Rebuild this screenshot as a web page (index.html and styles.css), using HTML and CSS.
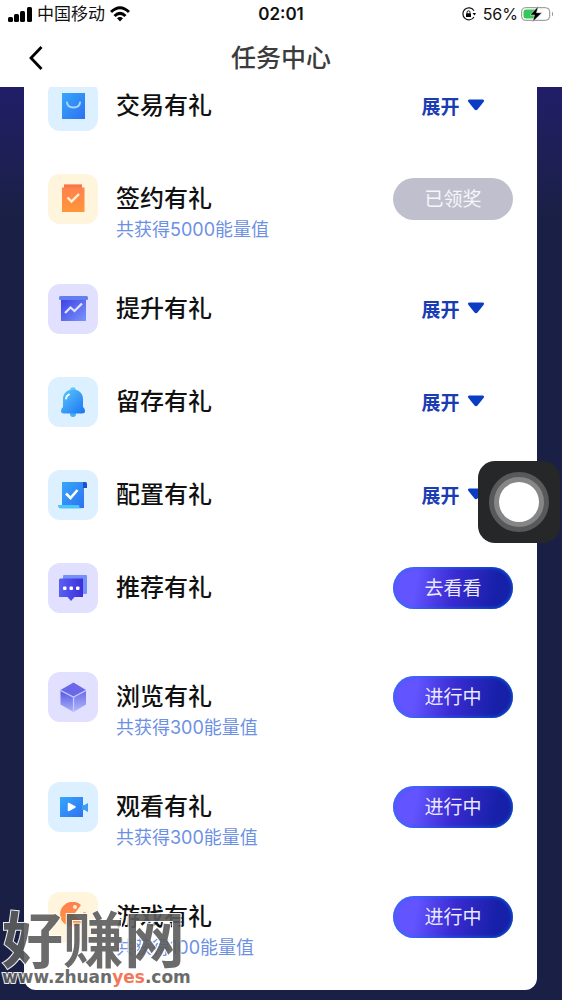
FILE: index.html
```html
<!DOCTYPE html>
<html lang="zh-CN">
<head>
<meta charset="utf-8">
<meta name="viewport" content="width=device-width, initial-scale=1">
<title>任务中心</title>
<link rel="stylesheet" href="styles.css">
</head>
<body>
<svg class="defs" width="0" height="0" aria-hidden="true">
  <defs>
    <linearGradient id="blue" x1="0" y1="0" x2="1" y2="1"><stop offset="0" stop-color="#35a8fb"/><stop offset="1" stop-color="#2f70f0"/></linearGradient>
    <linearGradient id="orange" x1="0" y1="0" x2="0" y2="1"><stop offset="0" stop-color="#ff7f50"/><stop offset="1" stop-color="#ff9638"/></linearGradient>
    <linearGradient id="indigo" x1="0" y1="0" x2="1" y2="1"><stop offset="0" stop-color="#3b3fe4"/><stop offset="1" stop-color="#7c94fa"/></linearGradient>
    <linearGradient id="bell" x1="0" y1="0" x2="1" y2="1"><stop offset="0" stop-color="#5cc8fb"/><stop offset="1" stop-color="#1a73f4"/></linearGradient>
    <linearGradient id="bubble" x1="0" y1="0" x2="1" y2="0"><stop offset="0" stop-color="#5a60f4"/><stop offset="1" stop-color="#3c2fd8"/></linearGradient>
    <linearGradient id="face" x1="0" y1="0" x2="0" y2="1"><stop offset="0" stop-color="#5355e0"/><stop offset="1" stop-color="#a9b2fb"/></linearGradient>
  </defs>
</svg>

<header class="top">
  <div class="status">
    <div class="status-side">
      <svg width="24" height="15" viewBox="0 0 24 15"><rect x="0" y="10" width="5" height="5" rx="1.5"/><rect x="6" y="7" width="5" height="8" rx="1.5"/><rect x="12" y="4" width="5" height="11" rx="1.5"/><rect x="19" y="0" width="5" height="15" rx="1.5"/></svg>
      <span class="carrier">中国移动</span>
      <svg width="20" height="16" viewBox="0 0 20 16" fill="none" stroke="#000" stroke-width="3"><path d="M1 6Q10-2.500 19 6"/><path d="M4.500 10Q10 4.800 15.500 10"/><path d="M10 15.500L7 12.300Q10 9.700 13 12.300Z" fill="#000" stroke="none"/></svg>
    </div>
    <time class="clock">02:01</time>
    <div class="status-side status-end">
      <svg width="14" height="14" viewBox="0 0 14 14"><path d="M12 3.700A6 6 0 1 0 12 10" fill="none" stroke="#111" stroke-width="1.200"/><path d="M10.500 6H14L12.500 8.500Z"/><rect x="4" y="6.300" width="5" height="3.700" rx=".6"/><path d="M5 6.500V5.300a1.500 1.500 0 0 1 3 0V6.500" fill="none" stroke="#111" stroke-width="1"/></svg>
      <span class="percent">56%</span>
      <svg class="battery" width="33" height="16" viewBox="0 0 33 16"><rect x=".7" y="1.700" width="28" height="12.600" rx="4" fill="#fff" stroke="#8b8b8b"/><path d="M5 3.500H15V12.500H5Q2.500 12.500 2.500 10V6Q2.500 3.500 5 3.500Z" fill="#34c759"/><path d="M31 5.500q2 2.300 0 5Z" fill="#8b8b8b"/><path d="M17.500 0L9 9H13.500L11.500 16L21 6.700H15.500Z" stroke="#fff" stroke-width=".5"/></svg>
    </div>
  </div>
  <div class="nav">
    <button class="back" type="button" aria-label="返回"><svg width="16" height="26" viewBox="0 0 16 26" fill="none" stroke="#000" stroke-width="2.800"><path d="M13.500 2L3 13L13.500 24"/></svg></button>
    <h1 class="nav-title">任务中心</h1>
    <span></span>
  </div>
</header>

<main class="page">
  <ul class="card">
    <li class="row">
      <span class="tile tile-blue"><svg width="30" height="30" viewBox="0 0 30 30"><rect x="4" y="2" width="23" height="26" fill="url(#blue)"/><path d="M9 11.500Q9.500 16.500 15.500 16.500T22 11.500" fill="none" stroke="#a9d6ff" stroke-width="2" stroke-linecap="round"/></svg></span>
      <div class="text"><h2 class="title">交易有礼</h2></div>
      <button class="expand" type="button">展开<svg class="caret" width="18" height="12" viewBox="0 0 18 12"><path d="M2.500.5H15.500Q18 .5 16.500 3L10.500 10.500Q9 12 7.500 10.500L1.500 3Q0 .5 2.500.5Z"/></svg></button>
    </li>
    <li class="row">
      <span class="tile tile-cream"><svg width="30" height="30" viewBox="0 0 30 30"><path d="M4 3.500H6V.500H24V3.500H26.500V28H4Z" fill="url(#orange)"/><path d="M6 .500H24V3.500H6Z" fill="#f5704a" opacity=".6"/><path d="M9.500 13.500L13.500 17.500L21 10" fill="none" stroke="#fff0d8" stroke-width="2.400"/></svg></span>
      <div class="text"><h2 class="title">签约有礼</h2><p class="sub">共获得5000能量值</p></div>
      <button class="pill pill-done" type="button">已领奖</button>
    </li>
    <li class="row">
      <span class="tile tile-lilac"><svg width="30" height="30" viewBox="0 0 30 30"><rect x="3" y="4" width="25" height="23" fill="url(#indigo)"/><rect x="1" y="2" width="29" height="4" rx="1.500" fill="#667df0"/><path d="M7 19L12.500 13.500L16.500 17L24 9.500" fill="none" stroke="#dfe2ff" stroke-width="2.300"/></svg></span>
      <div class="text"><h2 class="title">提升有礼</h2></div>
      <button class="expand" type="button">展开<svg class="caret" width="18" height="12" viewBox="0 0 18 12"><path d="M2.500.5H15.500Q18 .5 16.500 3L10.500 10.500Q9 12 7.500 10.500L1.500 3Q0 .5 2.500.5Z"/></svg></button>
    </li>
    <li class="row">
      <span class="tile tile-blue"><svg width="30" height="30" viewBox="0 0 30 30"><circle cx="15" cy="3" r="2.800" fill="#65c9fa"/><circle cx="15" cy="27" r="3" fill="#46aef8"/><path d="M15 2.500C21 2.500 25 6.500 25 12V20Q27 21.500 27 24Q27 26.500 24 26.500H6Q3 26.500 3 24Q3 21.500 5 20V12C5 6.500 9 2.500 15 2.500Z" fill="url(#bell)"/><path d="M8 11.500Q8.500 8.500 11 7.500" fill="none" stroke="#e6faff" stroke-width="2" stroke-linecap="round"/></svg></span>
      <div class="text"><h2 class="title">留存有礼</h2></div>
      <button class="expand" type="button">展开<svg class="caret" width="18" height="12" viewBox="0 0 18 12"><path d="M2.500.5H15.500Q18 .5 16.500 3L10.500 10.500Q9 12 7.500 10.500L1.500 3Q0 .5 2.500.5Z"/></svg></button>
    </li>
    <li class="row">
      <span class="tile tile-blue"><svg width="30" height="30" viewBox="0 0 30 30"><path d="M4 2H26V28H4Z" fill="url(#blue)"/><path d="M25 2H27.500Q29 2 29 4V8H25Z" fill="#1e50c8"/><path d="M0 25H21Q21 28.500 24 28.500H3Q0 28.500 0 25Z" fill="#4bc5fb"/><path d="M8 13.500L12.500 18L19.500 10" fill="none" stroke="#fff" stroke-width="2.600"/></svg></span>
      <div class="text"><h2 class="title">配置有礼</h2></div>
      <button class="expand" type="button">展开<svg class="caret" width="18" height="12" viewBox="0 0 18 12"><path d="M2.500.5H15.500Q18 .5 16.500 3L10.500 10.500Q9 12 7.500 10.500L1.500 3Q0 .5 2.500.5Z"/></svg></button>
    </li>
    <li class="row row-action">
      <span class="tile tile-lilac"><svg width="30" height="30" viewBox="0 0 30 30"><rect x="5" y="2" width="24" height="19" rx="1" fill="#7590fb"/><path d="M2 5.500H25V24H16.500L13 28L9.500 24H1V6.500Z" fill="url(#bubble)"/><g fill="#fff"><rect x="5" y="13.500" width="3.500" height="3.500" rx="1"/><rect x="11.500" y="13.500" width="3.500" height="3.500" rx="1"/><rect x="18" y="13.500" width="3.500" height="3.500" rx="1"/></g></svg></span>
      <div class="text"><h2 class="title">推荐有礼</h2></div>
      <button class="pill" type="button">去看看</button>
    </li>
    <li class="row">
      <span class="tile tile-lilac"><svg width="30" height="30" viewBox="0 0 30 30"><path d="M15.500.5L28 8L15.500 15L2.500 8Z" fill="#6a68e8"/><path d="M2.500 8L15.500 15V30L2.500 22.500Z" fill="url(#face)"/><path d="M28 8L15.500 15V30L28 22.500Z" fill="url(#face)" opacity=".85"/><path d="M2.500 8.500L15.500 15L28 8.500M15.500 15V29" fill="none" stroke="#c9cbff" stroke-width="1.200"/></svg></span>
      <div class="text"><h2 class="title">浏览有礼</h2><p class="sub">共获得300能量值</p></div>
      <button class="pill" type="button">进行中</button>
    </li>
    <li class="row">
      <span class="tile tile-blue"><svg width="30" height="30" viewBox="0 0 30 30"><rect x="2" y="5" width="23" height="20" fill="url(#blue)"/><path d="M24 13H26.500L30 11V20L26.500 18H24Z" fill="#3d9cf5"/><path d="M10.500 11.500L17 15L10.500 18.500Z" fill="#fff" stroke="#fff" stroke-width="1.500" stroke-linejoin="round"/></svg></span>
      <div class="text"><h2 class="title">观看有礼</h2><p class="sub">共获得300能量值</p></div>
      <button class="pill" type="button">进行中</button>
    </li>
    <li class="row">
      <span class="tile tile-cream"><svg width="30" height="30" viewBox="0 0 30 30"><path d="M23 3A12.500 12.500 0 1 0 24 20.500L16 12.500Z" fill="url(#orange)"/><circle cx="17" cy="5" r="2" fill="#fff4dc"/><circle cx="26.500" cy="12" r="2" fill="#ff9257"/></svg></span>
      <div class="text"><h2 class="title">游戏有礼</h2><p class="sub">共获得100能量值</p></div>
      <button class="pill" type="button">进行中</button>
    </li>
  </ul>
</main>

<button class="assist" type="button" aria-label="辅助触控"><span class="assist-ring"><span class="assist-dot"></span></span></button>

<div class="mark">
  <div class="mark-name">好赚网</div>
  <div class="mark-url">www.zhuan<span class="mark-accent">yes</span>.com</div>
</div>
</body>
</html>
```

FILE: styles.css
```css
* { box-sizing: border-box; }
body {
  margin: 0;
  min-height: 100vh;
  position: relative;
  overflow-x: hidden;
  background: #1a2045;
  font-family: Inter, "Noto Sans CJK SC", sans-serif;
  color: #111;
}
h1, h2, p, ul { margin: 0; padding: 0; }
button { border: 0; padding: 0; background: none; font: inherit; cursor: pointer; }
svg { display: block; flex: none; }
.defs { position: absolute; }

.top { background: #fff; }
.status {
  display: grid;
  grid-template-columns: 1fr auto 1fr;
  align-items: center;
  height: 28px;
  padding: 0 8px;
  font-size: 16px;
  line-height: 28px;
}
.status-side { display: flex; align-items: center; gap: 5px; }
.status-end { justify-content: flex-end; }
.carrier { font-size: 17px; }
.percent { margin-left: 2px; }
.clock { font-weight: 600; font-size: 17px; }
.battery { margin-left: -2px; }
.nav {
  display: grid;
  grid-template-columns: 1fr auto 1fr;
  align-items: center;
  height: 59px;
  padding: 0 28px;
}
.back { justify-self: start; }
.nav-title { font-size: 25px; line-height: 36px; font-weight: 500; color: #3c3c3c; }

.page {
  overflow: hidden;
  padding: 0 25px 10px 24px;
  background: linear-gradient(#211e68, #1a2045 130px);
}
.card {
  list-style: none;
  display: flex;
  flex-direction: column;
  gap: 43px;
  margin-top: -6px;
  padding: 0 24px 31px;
  background: #fff;
  border-radius: 0 0 12px 12px;
}
.row { display: flex; align-items: flex-start; }
.row-action { min-height: 66px; }
.tile {
  flex: none;
  display: grid;
  place-items: center;
  width: 50px;
  height: 50px;
  border-radius: 12px;
}
.tile-blue { background: #dcf0ff; }
.tile-cream { background: #fff4dc; }
.tile-lilac { background: #e1e0ff; }
.text { flex: 1; margin-left: 18px; }
.title { font-size: 24px; line-height: 50px; font-weight: 500; }
.sub { margin-top: -5px; font-size: 18px; line-height: 22px; color: #6c90e4; }
.pill, .expand {
  flex: none;
  width: 120px;
  height: 42px;
  margin-top: 4px;
  font-size: 19px;
}
.pill {
  padding-bottom: 4px;
  border-radius: 21px;
  color: #e9e9ff;
  background: linear-gradient(100deg, #6254ff 20%, #3a2bd2 50%, #1620a8 85%);
  box-shadow: inset 0 0 4px #0a78f0;
}
.pill-done { background: #c0bfce; color: #f6f6fa; box-shadow: none; }
.expand {
  display: flex;
  align-items: center;
  justify-content: center;
  gap: 7px;
  padding-bottom: 2px;
  font-weight: 700;
  color: #1a3db4;
}
.caret { fill: #0a3cc4; }

.assist {
  position: absolute;
  top: 461px;
  right: 2px;
  display: grid;
  place-items: center;
  width: 82px;
  height: 82px;
  border-radius: 17px;
  background: #252729;
}
.assist-ring {
  display: grid;
  place-items: center;
  width: 60px;
  height: 60px;
  border-radius: 50%;
  border: 5px solid #58595a;
  background: #868686;
}
.assist-dot { width: 40px; height: 40px; border-radius: 50%; background: #fff; }

.mark {
  position: absolute;
  left: 2px;
  top: 913px;
  color: #5c5c5c;
  -webkit-text-stroke: 2px #fff;
  paint-order: stroke fill;
  opacity: .9;
  pointer-events: none;
}
.mark-name { font-size: 61px; line-height: 56px; font-weight: 700; }
.mark-url { font-family: "DejaVu Sans", sans-serif; font-size: 17px; line-height: 16px; font-weight: 700; }
.mark-accent { color: #f26a4a; }
```
